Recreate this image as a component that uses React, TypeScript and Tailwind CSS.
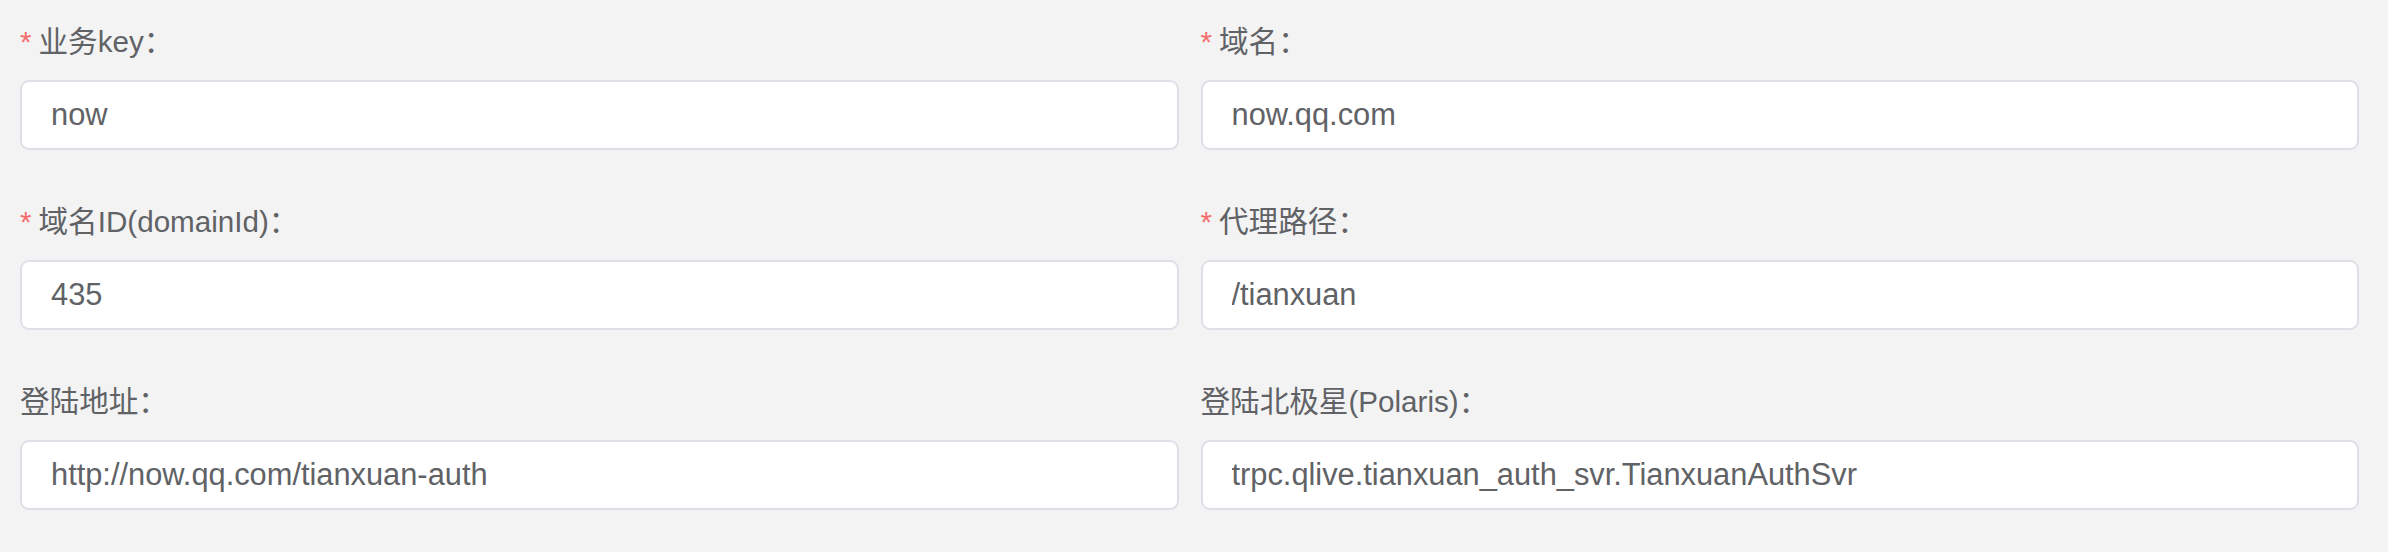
const fields = [
    { label: '业务key：', value: 'now', required: true },
    { label: '域名：', value: 'now.qq.com', required: true },
    { label: '域名ID(domainId)：', value: '435', required: true },
    { label: '代理路径：', value: '/tianxuan', required: true },
    { label: '登陆地址：', value: 'http://now.qq.com/tianxuan-auth', required: false },
    { label: '登陆北极星(Polaris)：', value: 'trpc.qlive.tianxuan_auth_svr.TianxuanAuthSvr', required: false },
];

const App = () => {
    return (
        <div
            className="min-h-screen bg-[#f3f3f3] pt-[20px] pl-[20px] pr-[29px] text-[#606266]"
            style={{ fontFamily: '"Liberation Sans", "Noto Sans CJK SC", sans-serif' }}
        >
            <div className="grid grid-cols-2 gap-x-[22px]">
                {fields.map((field, index) => (
                    <div className="mb-[50px]" key={index}>
                        <div className="h-[44px] leading-[44px] text-[29.6px] mb-[16px] whitespace-nowrap">
                            {field.required && <span className="text-[#f56c6c] mr-[7px]">*</span>}
                            {field.label}
                        </div>
                        <input
                            className="block w-full h-[70px] bg-white border-2 border-[#dde0e6] rounded-[9px] px-[29px] text-[30.8px] text-[#606266] outline-none"
                            value={field.value}
                            readOnly
                        />
                    </div>
                ))}
            </div>
        </div>
    );
};

export default App;
